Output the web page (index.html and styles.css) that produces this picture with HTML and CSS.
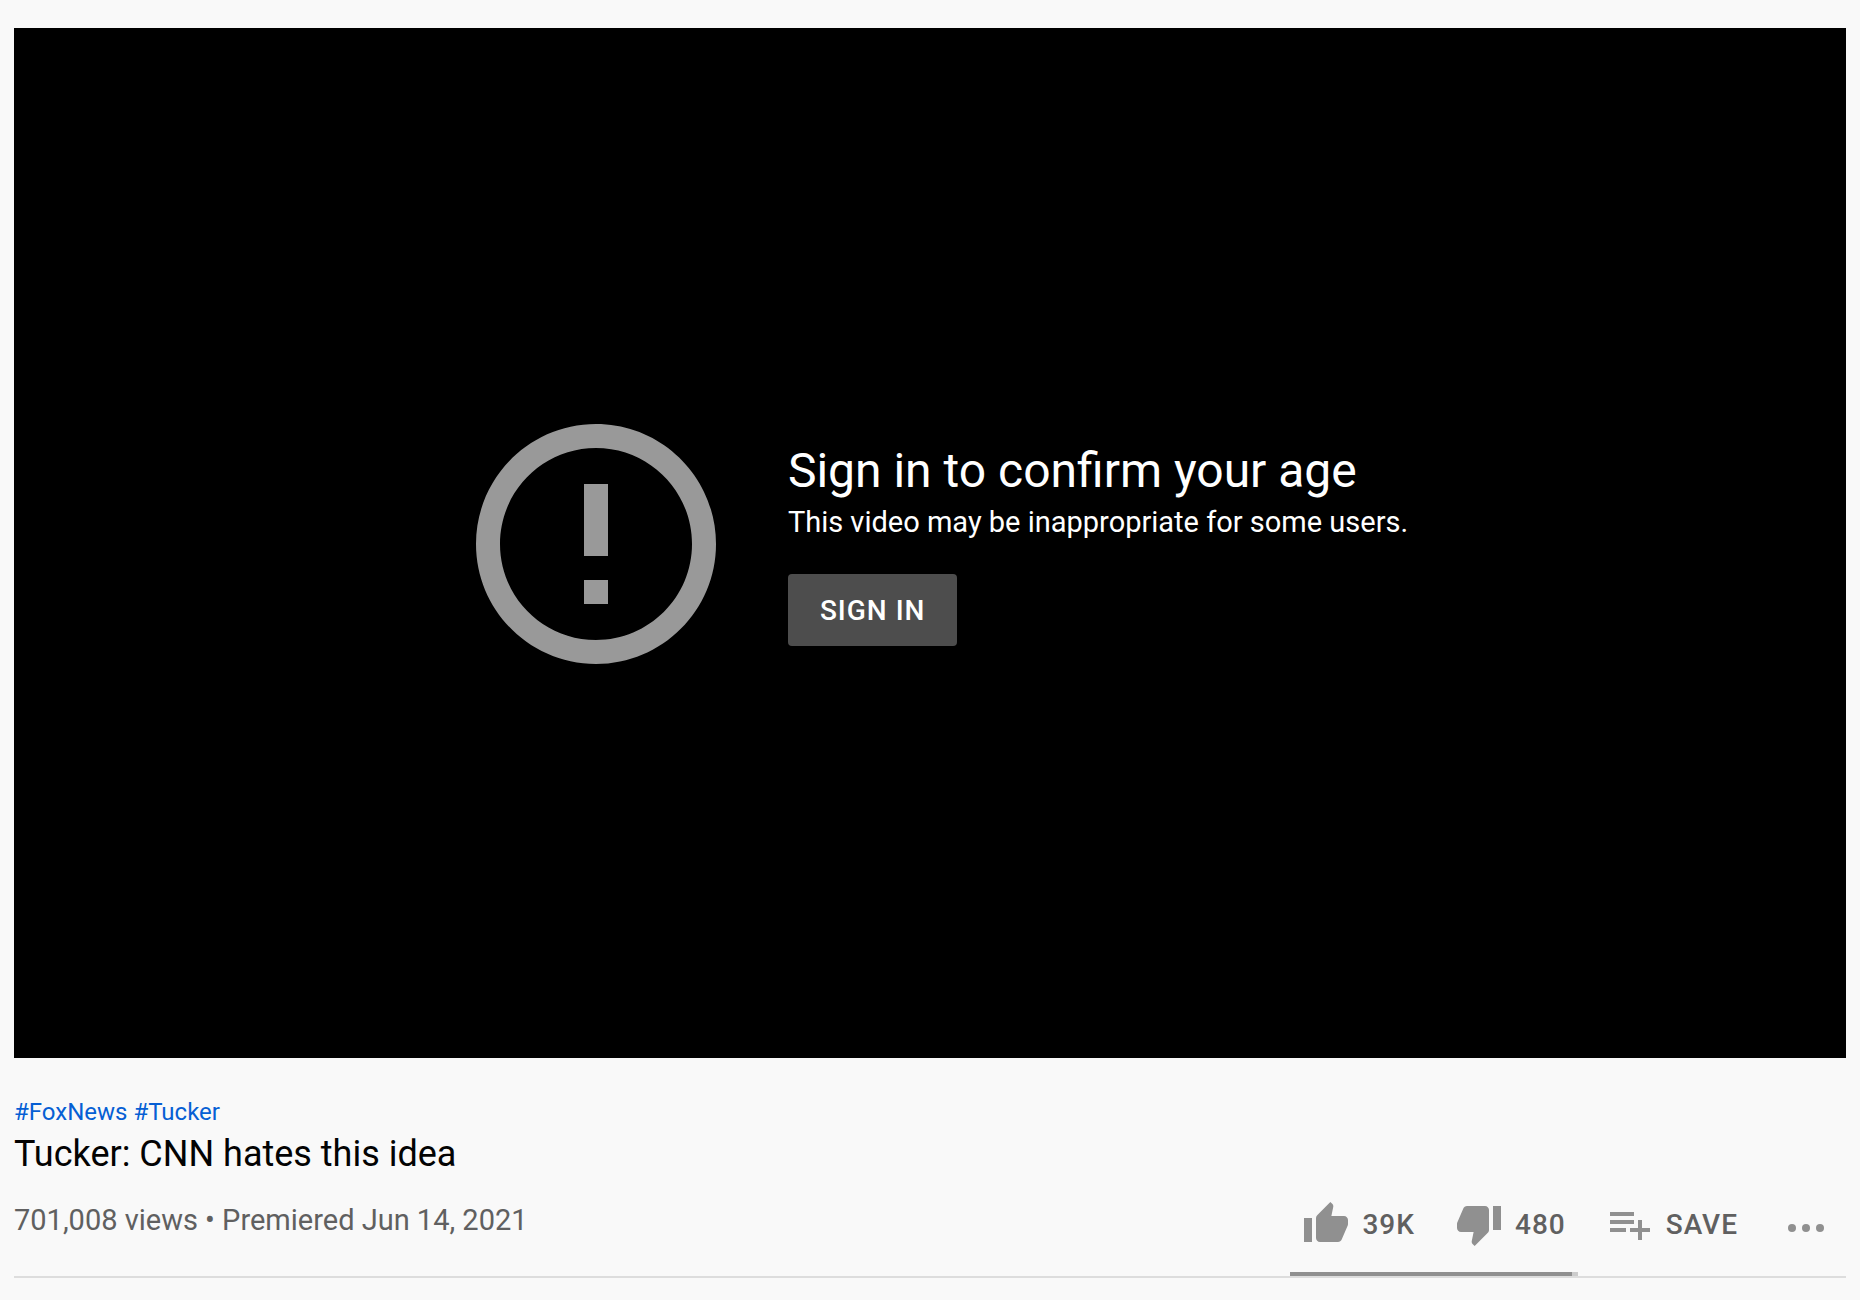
FILE: index.html
```html
<!DOCTYPE html>
<html lang="en">
<head>
  <meta charset="UTF-8">
  <meta name="viewport" content="width=device-width, initial-scale=1.0">
  <title>Tucker: CNN hates this idea</title>
  <link rel="stylesheet" href="styles.css">
</head>
<body>
  <main class="watch">
    <section class="player">
      <svg class="alert-icon" viewBox="0 0 24 24" aria-hidden="true">
        <path d="M11 15h2v2h-2zm0-8h2v6h-2zm1-5C6.48 2 2 6.48 2 12s4.48 10 10 10 10-4.48 10-10S17.52 2 12 2zm0 18c-4.42 0-8-3.58-8-8s3.58-8 8-8 8 3.58 8 8-3.58 8-8 8z"/>
      </svg>
      <div class="message">
        <h2>Sign in to confirm your age</h2>
        <p>This video may be inappropriate for some users.</p>
        <button class="sign-in">SIGN IN</button>
      </div>
    </section>

    <section class="info">
      <div class="tags"><a href="#FoxNews">#FoxNews</a> <a href="#Tucker">#Tucker</a></div>
      <h1>Tucker: CNN hates this idea</h1>
      <div class="info-row">
        <p class="meta">701,008 views • Premiered Jun 14, 2021</p>
        <div class="menu">
          <div class="sentiment">
            <div class="votes">
              <button class="action">
                <svg viewBox="0 0 24 24" aria-hidden="true"><path d="M1 21h4V9H1v12zm22-11c0-1.1-.9-2-2-2h-6.31l.95-4.57.03-.32c0-.41-.17-.79-.44-1.06L14.17 1 7.59 7.59C7.22 7.95 7 8.45 7 9v10c0 1.1.9 2 2 2h9c.83 0 1.54-.5 1.84-1.22l3.02-7.05c.09-.23.14-.47.14-.73v-2z"/></svg>
                39K
              </button>
              <button class="action">
                <svg viewBox="0 0 24 24" aria-hidden="true"><path d="M15 3H6c-.83 0-1.54.5-1.84 1.22l-3.02 7.05c-.09.23-.14.47-.14.73v2c0 1.1.9 2 2 2h6.31l-.95 4.57-.03.32c0 .41.17.79.44 1.06L9.83 23l6.59-6.59c.36-.36.58-.86.58-1.41V5c0-1.1-.9-2-2-2zm4 0v12h4V3h-4z"/></svg>
                480
              </button>
            </div>
            <div class="ratio"><div class="ratio-likes"></div></div>
          </div>
          <button class="action">
            <svg viewBox="0 0 24 24" aria-hidden="true"><path d="M14 10H2v2h12v-2zm0-4H2v2h12V6zm4 8v-4h-2v4h-4v2h4v4h2v-4h4v-2h-4zM2 16h8v-2H2v2z"/></svg>
            SAVE
          </button>
          <button class="action more" aria-label="More actions">
            <svg viewBox="0 0 24 24" aria-hidden="true"><circle cx="5" cy="14" r="2"/><circle cx="12" cy="14" r="2"/><circle cx="19" cy="14" r="2"/></svg>
          </button>
        </div>
      </div>
    </section>
  </main>
</body>
</html>
```

FILE: styles.css
```css
* {
  box-sizing: border-box;
}
body {
  margin: 0;
  background: #f9f9f9;
  font-family: Roboto, Arial, sans-serif;
}
h1, h2, p {
  margin: 0;
  font-weight: 400;
}
button {
  border: none;
  font-family: inherit;
  font-size: 28px;
  font-weight: 500;
  letter-spacing: 1px;
  cursor: pointer;
}
.watch {
  padding: 28px 14px 0;
}
.player {
  display: flex;
  justify-content: center;
  align-items: center;
  gap: 48px;
  aspect-ratio: 916 / 515;
  padding-top: 2px;
  background: #000;
  color: #fff;
}
.alert-icon {
  width: 288px;
  height: 288px;
  fill: #999;
}
.message h2 {
  font-size: 48px;
  line-height: 58px;
}
.message p {
  font-size: 29px;
  line-height: 44px;
}
.sign-in {
  height: 72px;
  margin-top: 30px;
  padding: 0 32px;
  border-radius: 4px;
  background: #4d4d4d;
  color: #fff;
}
.info {
  padding-top: 38px;
  border-bottom: 2px solid #ddd;
}
.tags {
  font-size: 24px;
  line-height: 32px;
}
.tags a {
  color: #065fd4;
  text-decoration: none;
}
h1 {
  color: #030303;
  font-size: 36px;
  line-height: 52px;
}
.info-row {
  display: flex;
  justify-content: space-between;
  align-items: flex-start;
  margin-top: 20px;
}
.meta {
  color: #606060;
  font-size: 29px;
  line-height: 40px;
}
.menu {
  display: flex;
  align-items: flex-start;
  gap: 28px;
  padding-right: 16px;
}
.votes {
  display: flex;
  gap: 40px;
  padding: 0 12px 24px;
}
.action {
  display: flex;
  align-items: center;
  gap: 12px;
  height: 48px;
  padding: 0;
  background: none;
  color: #606060;
}
.action svg {
  width: 48px;
  height: 48px;
  fill: #909090;
}
.more {
  margin-left: 16px;
}
.ratio {
  height: 4px;
  background: #ccc;
}
.ratio-likes {
  width: 98%;
  height: 100%;
  background: #909090;
}
```
